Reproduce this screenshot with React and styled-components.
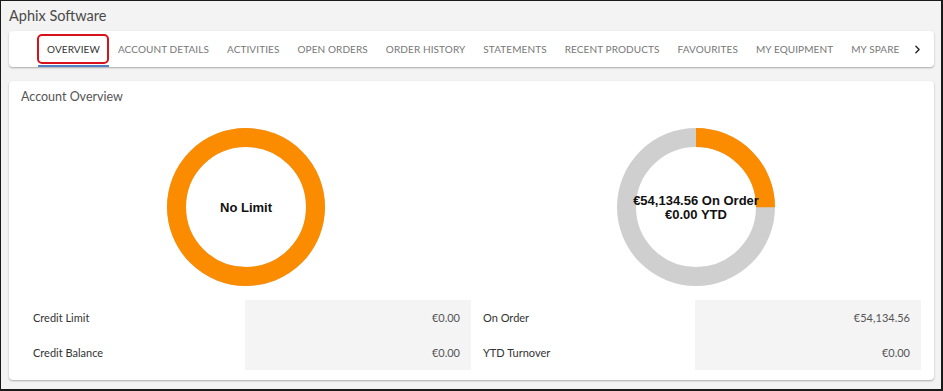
import React from "react";
import styled, { createGlobalStyle } from "styled-components";
import { ChevronRight } from "lucide-react";

const GlobalStyle = createGlobalStyle`
  html, body {
    margin: 0;
    padding: 0;
    background: #fff;
  }
  * {
    box-sizing: border-box;
  }
`;

const Frame = styled.div`
  width: 943px;
  height: 391px;
  border: 1px solid #1a1a1a;
  border-right-width: 2px;
  border-bottom-width: 2px;
  background: #f3f3f3;
  padding: 0 7px 0 8px;
  font-family: Lato, "Open Sans", sans-serif;
  overflow: hidden;
`;

const PageTitle = styled.div`
  font-size: 14.5px;
  line-height: 20px;
  color: #4a4a4a;
  padding-top: 5px;
`;

const TabBar = styled.nav`
  margin-top: 5px;
  height: 36px;
  background: #fff;
  border-radius: 4px;
  box-shadow: 0 1px 2px rgba(0, 0, 0, 0.3);
  display: flex;
  align-items: stretch;
  padding-left: 29px;
`;

const Tabs = styled.div`
  display: flex;
  gap: 0;
`;

const Tab = styled.div`
  position: relative;
  display: flex;
  align-items: center;
  padding: 2px 9px 0;
  font-size: 10px;
  letter-spacing: 0.1px;
  text-transform: uppercase;
  white-space: nowrap;
  color: ${(p) => (p.$active ? "#333" : "#777")};
  border-bottom: 2px solid ${(p) => (p.$active ? "#4f7fc4" : "transparent")};
`;

const Highlight = styled.span`
  position: absolute;
  left: -1px;
  right: 0;
  top: 3px;
  bottom: 1px;
  border: 2px solid #d8121b;
  border-radius: 5px;
  pointer-events: none;
`;

const Arrow = styled.div`
  display: flex;
  align-items: center;
  margin-left: 3px;
  color: #222;
`;

const Card = styled.section`
  margin-top: 14px;
  background: #fff;
  border-radius: 4px;
  box-shadow: 0 1px 2px rgba(0, 0, 0, 0.3);
  padding: 8px 13px 10px 12px;
`;

const CardTitle = styled.h2`
  margin: 0;
  font-size: 12.5px;
  line-height: 16px;
  font-weight: 400;
  color: #555;
`;

const Charts = styled.div`
  display: grid;
  grid-template-columns: 1fr 1fr;
  margin-top: 22px;
`;

const ChartCell = styled.div`
  display: flex;
  justify-content: center;
`;

const Summary = styled.div`
  margin-top: 13px;
  display: grid;
  grid-template-columns: 1fr 1fr;
`;

const SummaryHalf = styled.div`
  display: grid;
  grid-template-columns: 224px 1fr;
`;

const Label = styled.div`
  height: 35px;
  display: flex;
  align-items: center;
  padding-left: 12px;
  font-size: 11px;
  color: #333;
`;

const Value = styled.div`
  height: 35px;
  display: flex;
  align-items: center;
  justify-content: flex-end;
  padding-right: 11px;
  font-size: 11px;
  color: #555;
  background: #f4f4f4;
`;

const Donut = ({ percent, lines }) => {
  const r = 69.5;
  const c = 2 * Math.PI * r;
  const orange = (percent / 100) * c;
  return (
    <svg width="160" height="160" viewBox="0 0 160 160">
      <circle cx="80" cy="80" r={r} fill="none" stroke="#cfcfcf" strokeWidth="19" />
      <circle
        cx="80"
        cy="80"
        r={r}
        fill="none"
        stroke="#fb8c00"
        strokeWidth="19"
        strokeDasharray={`${orange} ${c}`}
        transform="rotate(-90 80 80)"
      />
      {lines.map((line, i) => (
        <text
          key={line}
          x="80"
          y={80 + (i - (lines.length - 1) / 2) * 14 + 5}
          textAnchor="middle"
          fontFamily="'Liberation Sans', Arial, sans-serif"
          fontWeight="700"
          fontSize="13"
          fill="#111"
        >
          {line}
        </text>
      ))}
    </svg>
  );
};

const tabs = [
  "Overview",
  "Account Details",
  "Activities",
  "Open Orders",
  "Order History",
  "Statements",
  "Recent Products",
  "Favourites",
  "My Equipment",
  "My Spare",
];

const App = () => {
  return (
    <>
      <GlobalStyle />
      <Frame>
        <PageTitle>Aphix Software</PageTitle>
        <TabBar>
          <Tabs>
            {tabs.map((t, i) => (
              <Tab key={t} $active={i === 0}>
                {t}
                {i === 0 && <Highlight />}
              </Tab>
            ))}
          </Tabs>
          <Arrow>
            <ChevronRight size={13} strokeWidth={2.5} />
          </Arrow>
        </TabBar>
        <Card>
          <CardTitle>Account Overview</CardTitle>
          <Charts>
            <ChartCell>
              <Donut percent={100} lines={["No Limit"]} />
            </ChartCell>
            <ChartCell>
              <Donut percent={25} lines={["€54,134.56 On Order", "€0.00 YTD"]} />
            </ChartCell>
          </Charts>
          <Summary>
            <SummaryHalf>
              <Label>Credit Limit</Label>
              <Value>€0.00</Value>
              <Label>Credit Balance</Label>
              <Value>€0.00</Value>
            </SummaryHalf>
            <SummaryHalf>
              <Label>On Order</Label>
              <Value>€54,134.56</Value>
              <Label>YTD Turnover</Label>
              <Value>€0.00</Value>
            </SummaryHalf>
          </Summary>
        </Card>
      </Frame>
    </>
  );
};

export default App;
